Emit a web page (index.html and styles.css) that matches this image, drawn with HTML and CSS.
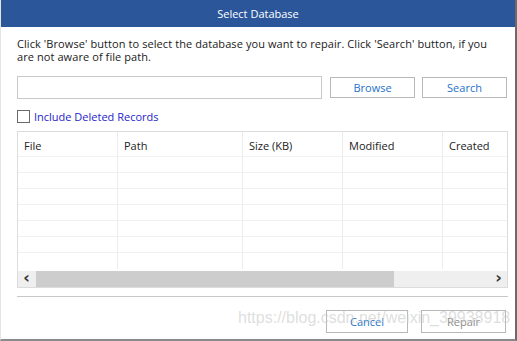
FILE: index.html
```html
<!DOCTYPE html>
<html>
<head>
<meta charset="utf-8">
<link rel="stylesheet" href="styles.css">
</head>
<body>
<div class="dialog">
  <div class="titlebar">Select Database</div>
  <div class="content">
    <p class="desc">Click 'Browse' button to select the database you want to repair. Click 'Search' button, if you are not aware of file path.</p>
    <div class="pathrow">
      <div class="pathinput"></div>
      <div class="btn blue browse">Browse</div>
      <div class="btn blue">Search</div>
    </div>
    <label class="check"><span class="box"></span><span class="checklabel">Include Deleted Records</span></label>
    <div class="table">
      <div class="grid">
        <div class="row head"><div class="c c1">File</div><div class="c c2">Path</div><div class="c c3">Size (KB)</div><div class="c c4">Modified</div><div class="c c5">Created</div></div>
        <div class="row"><div class="c c1"></div><div class="c c2"></div><div class="c c3"></div><div class="c c4"></div><div class="c c5"></div></div>
        <div class="row"><div class="c c1"></div><div class="c c2"></div><div class="c c3"></div><div class="c c4"></div><div class="c c5"></div></div>
        <div class="row"><div class="c c1"></div><div class="c c2"></div><div class="c c3"></div><div class="c c4"></div><div class="c c5"></div></div>
        <div class="row"><div class="c c1"></div><div class="c c2"></div><div class="c c3"></div><div class="c c4"></div><div class="c c5"></div></div>
        <div class="row"><div class="c c1"></div><div class="c c2"></div><div class="c c3"></div><div class="c c4"></div><div class="c c5"></div></div>
        <div class="row"><div class="c c1"></div><div class="c c2"></div><div class="c c3"></div><div class="c c4"></div><div class="c c5"></div></div>
        <div class="row last"><div class="c c1"></div><div class="c c2"></div><div class="c c3"></div><div class="c c4"></div><div class="c c5"></div></div>
      </div>
      <div class="hscroll">
        <div class="arrow">&#8249;</div>
        <div class="track"><div class="thumb"></div></div>
        <div class="arrow">&#8250;</div>
      </div>
    </div>
    <div class="sep"></div>
    <div class="footer">
      <div class="btn blue cancel">Cancel</div>
      <div class="btn disabled">Repair</div>
    </div>
  </div>
  <div class="watermark">https://blog.csdn.net/weixin_39938918</div>
</div>
</body>
</html>
```
FILE: styles.css
```css
* { box-sizing: border-box; }
html, body { margin: 0; padding: 0; background: #fff; }
body { width: 517px; height: 341px; overflow: hidden; font-family: "Open Sans", "Noto Sans", sans-serif; font-size: 11px; color: #222; }
.dialog {
  position: relative;
  width: 517px;
  height: 341px;
  border-left: 1px solid #e4e4e4;
  border-right: 2px solid #6b6b6b;
  border-bottom: 2px solid #8a8a8a;
  background: #fff;
}
.titlebar {
  height: 27px;
  background: #2b579a;
  color: #fff;
  text-align: center;
  line-height: 27px;
  font-size: 11px;
}
.content { padding: 0 7px 0 16px; }
.desc {
  margin: 10px 0 0 0;
  line-height: 13px;
  font-size: 11px;
  letter-spacing: 0.08px;
  color: #1a1a1a;
  width: 485px;
}
.pathrow { display: flex; margin-top: 13px; height: 23px; align-items: center; }
.pathinput { width: 305px; height: 23px; border: 1px solid #c9c9c9; }
.btn {
  width: 85px;
  height: 21px;
  border: 1px solid #b8b8b8;
  text-align: center;
  line-height: 19px;
  font-size: 11px;
  background: #fff;
}
.blue { color: #1d72c9; }
.browse { margin-left: 8px; margin-right: 7px; }
.check { display: flex; align-items: center; margin-top: 10px; height: 14px; }
.box { width: 13px; height: 13px; border: 1px solid #6a6a6a; display: block; }
.checklabel { color: #2525c8; margin-left: 4px; font-size: 11px; }
.table {
  margin-top: 8px;
  width: 491px;
  height: 157px;
  border: 1px solid #dcdcdc;
}
.grid { height: 138px; overflow: hidden; }
.row { display: flex; height: 16px; border-bottom: 1px solid #f0f0f0; }
.row.head { height: 25px; border-bottom: 1px solid #f2f2f2; }
.row.last { border-bottom: none; }
.c { border-right: 1px solid #ececec; padding-left: 6px; line-height: 27px; font-size: 11px; color: #222; }
.c1 { width: 100px; }
.c2 { width: 125px; }
.c3 { width: 100px; }
.c4 { width: 100px; }
.c5 { flex: 1; border-right: none; }
.hscroll { display: flex; height: 16px; background: #efefef; margin-top: 1px; }
.arrow { width: 17px; height: 16px; text-align: center; line-height: 14px; font-size: 16px; font-weight: bold; color: #333; font-family: "DejaVu Sans", sans-serif; }
.track { flex: 1; position: relative; }
.thumb { width: 358px; height: 16px; margin-left: 1px; background: #cdcdcd; }
.sep { width: 491px; height: 1px; background: #c8c8c8; margin-top: 8px; }
.footer { display: flex; justify-content: flex-end; padding-right: 2px; margin-top: 13px; }
.cancel { width: 82px; height: 23px; line-height: 21px; margin-right: 13px; }
.disabled { color: #8a8a8a; width: 85px; height: 23px; line-height: 21px; }
.watermark {
  position: absolute;
  left: 237px;
  top: 309px;
  font-family: "Liberation Sans", Arial, sans-serif;
  font-size: 16px;
  color: rgba(200, 200, 200, 0.6);
  pointer-events: none;
  white-space: nowrap;
}
```
